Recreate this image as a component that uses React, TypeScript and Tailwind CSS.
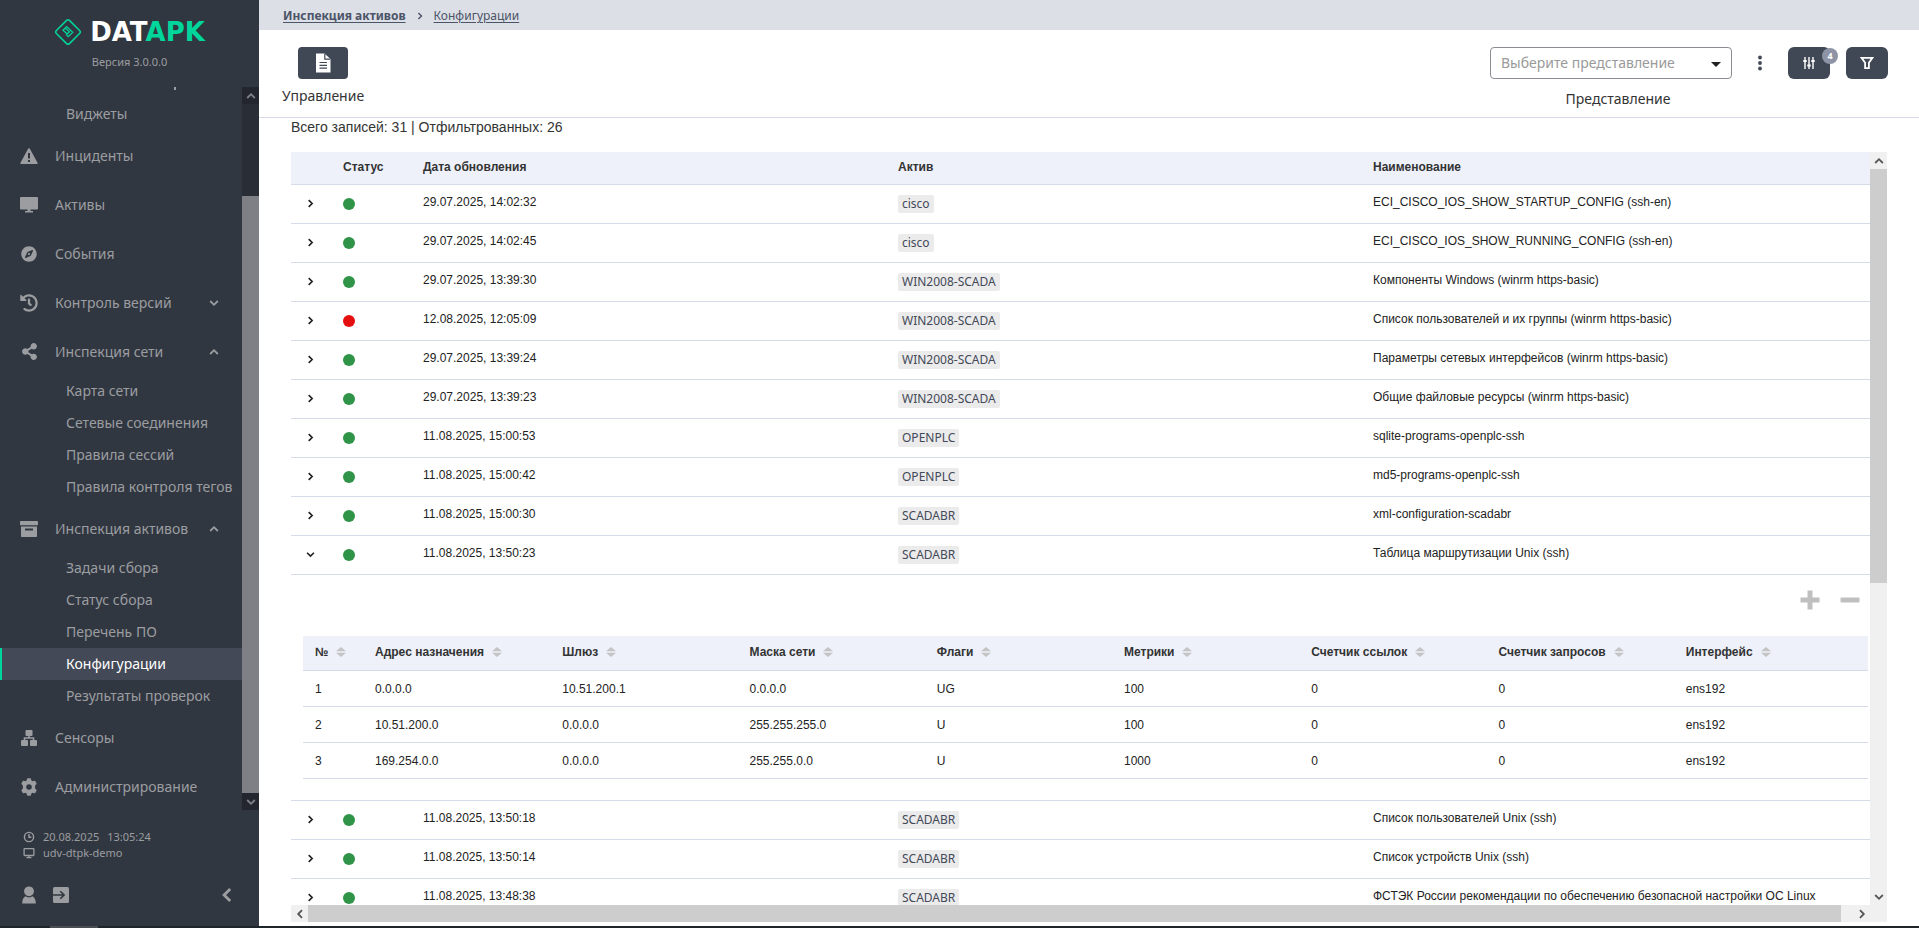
import { Fragment, useState, type ReactNode } from "react";
import { FaHistory, FaShareAlt, FaCompass } from "react-icons/fa";

type IconProps = { className?: string };

const svgBase = { xmlns: "http://www.w3.org/2000/svg", "aria-hidden": true } as const;

function LogoMark() {
  return (
    <svg {...svgBase} viewBox="0 0 28 28" className="size-7" fill="none" stroke="#00d69b">
      <rect x="4.800" y="4.800" width="18.400" height="18.400" rx="2" strokeWidth="1.500" transform="rotate(45 14 14)" />
      <path d="M13.300 16 9 12.200 12.600 8.600 18.700 14.200 14.300 18.600 12 16.400M11.600 10.500 15.400 13.700 13.200 16" strokeWidth="1.300" />
    </svg>
  );
}

function WarningIcon() {
  return (
    <svg {...svgBase} viewBox="0 0 18 18" className="size-[18px]" fill="currentColor">
      <path
        fillRule="evenodd"
        d="M9 1.200c.4 0 .7.2.9.5l7.600 14c.4.7-.1 1.300-.8 1.300H1.300c-.7 0-1.200-.6-.8-1.300l7.600-14c.2-.3.5-.5.9-.5zM8 6v5.500h2V6zM8 13v2h2v-2z"
      />
    </svg>
  );
}

function MonitorIcon() {
  return (
    <svg {...svgBase} viewBox="0 0 18 18" className="size-[18px]" fill="currentColor">
      <rect x="0" y="1" width="18" height="12.500" rx="1" />
      <path d="M7.500 13h3v2h2.500v1.500H5V15h2.500z" />
    </svg>
  );
}

function ArchiveIcon() {
  return (
    <svg {...svgBase} viewBox="0 0 18 18" className="size-[18px]" fill="currentColor">
      <rect x="0" y="1" width="18" height="4.200" rx=".6" />
      <path fillRule="evenodd" d="M1 6.500h16V16c0 .6-.4 1-1 1H2c-.6 0-1-.4-1-1zM5 8.600v2h8v-2z" />
    </svg>
  );
}

function SitemapIcon() {
  return (
    <svg {...svgBase} viewBox="0 0 18 18" className="size-[18px]" fill="currentColor">
      <rect x="5.500" y="1" width="7" height="6" rx="1" />
      <rect x="1" y="11" width="7" height="6" rx="1" />
      <rect x="10" y="11" width="7" height="6" rx="1" />
      <path d="M8.200 6h1.600v2.200h4.500V12h-1.600V9.800H5.300V12H3.700V8.200h4.500z" />
    </svg>
  );
}

function GearIcon() {
  return (
    <svg {...svgBase} viewBox="0 0 18 18" className="size-[18px]" fill="currentColor">
      <path
        fillRule="evenodd"
        d="M7 .9 C7.100.4 7.400.2 7.800.2h2.400c.4 0 .7.2.8.7l.4 1.700 1.100.6 1.700-.5c.5-.1.8 0 1 .3l1.300 2.200c.2.4.2.7-.2 1.100L15.100 7.600v2.800l1.200 1.300c.4.4.4.7.2 1.100L15.200 15c-.2.3-.5.4-1 .3l-1.700-.5-1.100.6-.4 1.700c-.1.5-.4.7-.8.7H7.800c-.4 0-.7-.2-.8-.7l-.4-1.700-1.100-.6-1.700.5c-.5.1-.8 0-1-.3L1.500 12.800c-.2-.4-.2-.7.2-1.100L2.900 10.400V7.600L1.700 6.300c-.4-.4-.4-.7-.2-1.100L2.800 3c.2-.3.5-.4 1-.3l1.700.5 1.100-.6zM9 6.200a2.800 2.800 0 1 0 0 5.600 2.800 2.800 0 0 0 0-5.600z"
      />
    </svg>
  );
}

function Chevron({ className }: IconProps) {
  return (
    <svg {...svgBase} viewBox="0 0 10 10" className={className} fill="none" stroke="currentColor" strokeWidth="1.800">
      <path d="M1.200 3 5 6.800 8.800 3" />
    </svg>
  );
}

function ClockIcon() {
  return (
    <svg {...svgBase} viewBox="0 0 12 12" className="size-3" fill="none" stroke="currentColor" strokeWidth="1.400">
      <circle cx="6" cy="6" r="4.600" />
      <path d="M6 3v3.200h2.400" />
    </svg>
  );
}

function HostIcon() {
  return (
    <svg {...svgBase} viewBox="0 0 12 12" className="size-3" fill="none" stroke="currentColor" strokeWidth="1.300">
      <rect x="1.100" y="1.700" width="9.800" height="6.800" rx=".5" />
      <path d="M3.500 10.600h5M6 8.500v2" />
    </svg>
  );
}

function UserIcon() {
  return (
    <svg {...svgBase} viewBox="0 0 18 18" className="size-[18px]" fill="currentColor">
      <circle cx="9" cy="5.300" r="4.900" />
      <path d="M5.300 10.300c2.200 1.500 5.200 1.500 7.400 0 2 1.200 3.100 3.600 3.100 7.200H2.200c0-3.600 1.100-6 3.100-7.200z" />
    </svg>
  );
}

function ExitIcon() {
  return (
    <svg {...svgBase} viewBox="0 0 18 18" className="size-[18px]" fill="none">
      <rect x="1" y="1" width="16" height="16" rx="1.500" fill="currentColor" />
      <path d="M1 9h10.500M8.300 5.200 12.100 9l-3.800 3.800" stroke="#313740" strokeWidth="1.600" />
    </svg>
  );
}

function DocIcon() {
  return (
    <svg {...svgBase} viewBox="0 0 18 20" className="h-5 w-[18px]">
      <path d="M2 .5h8.500L16.500 6v13.500H2z" fill="#fff" />
      <path d="M10.800.8v5.300h5.400" fill="none" stroke="#414855" strokeWidth="1.200" />
      <path d="M5.500 9.500h7.500M5.500 12.300h7.500M5.500 15.100h7.500" stroke="#414855" strokeWidth="1.200" />
    </svg>
  );
}

function SlidersIcon() {
  return (
    <svg {...svgBase} viewBox="0 0 12 12" className="size-3" fill="none" stroke="#fff" strokeWidth="1.400">
      <path d="M2 0v12M6 0v12M10 0v12" />
      <path d="M.3 4h3.400M4.300 8.500h3.400M8.300 4h3.400" strokeWidth="2.200" />
    </svg>
  );
}

function FunnelIcon() {
  return (
    <svg {...svgBase} viewBox="0 0 14 14" className="size-3.5" fill="none" stroke="#fff" strokeWidth="1.800">
      <path d="M1.600 1.900h10.800L8.900 6.700v5.500H5.100V6.700z" />
    </svg>
  );
}

function SortIcon() {
  return (
    <svg {...svgBase} viewBox="0 0 10 10" className="size-2.5" fill="#c4c4c4">
      <path d="M5 0 10 4.300H0zM5 10 0 5.700h10z" />
    </svg>
  );
}

type Section = { label: string; icon: ReactNode; open?: boolean; items?: string[] };

const sections: Section[] = [
  { label: "Инциденты", icon: <WarningIcon /> },
  { label: "Активы", icon: <MonitorIcon /> },
  { label: "События", icon: <FaCompass className="size-4" /> },
  { label: "Контроль версий", icon: <FaHistory className="size-[18px]" />, open: false },
  {
    label: "Инспекция сети",
    icon: <FaShareAlt className="size-[17px]" />,
    open: true,
    items: ["Карта сети", "Сетевые соединения", "Правила сессий", "Правила контроля тегов"],
  },
  {
    label: "Инспекция активов",
    icon: <ArchiveIcon />,
    open: true,
    items: ["Задачи сбора", "Статус сбора", "Перечень ПО", "Конфигурации", "Результаты проверок"],
  },
  { label: "Сенсоры", icon: <SitemapIcon /> },
  { label: "Администрирование", icon: <GearIcon /> },
];

function SubItem({ label, active }: { label: string; active?: boolean }) {
  return (
    <a
      href="#"
      className={
        active
          ? "flex h-8 shrink-0 items-center border-l-2 border-[#00d69b] bg-[#434956] pl-16 whitespace-nowrap text-white"
          : "flex h-8 shrink-0 items-center border-l-2 border-transparent pl-16 whitespace-nowrap"
      }
    >
      {label}
    </a>
  );
}

function Sidebar() {
  return (
    <aside className="flex w-[259px] shrink-0 flex-col bg-[#313740] font-['Noto_Sans',sans-serif] text-[#9b9da1]">
      <div className="flex h-[87px] shrink-0 flex-col items-center pt-[18px]">
        <div className="flex items-center gap-2">
          <LogoMark />
          <span className="font-['DejaVu_Sans',sans-serif] text-[26px] leading-7 font-bold text-white">
            DAT<span className="text-[#00d69b]">APK</span>
          </span>
        </div>
        <span className="pt-2 text-[11px] leading-4">Версия 3.0.0.0</span>
      </div>

      <div className="flex min-h-0 flex-1">
        <nav className="flex min-w-0 flex-1 flex-col overflow-hidden text-sm">
          <div className="h-[11px] shrink-0 pl-[174px]">
            <div className="h-[3px] w-0.5 bg-[#9b9da1]" />
          </div>
          <SubItem label="Виджеты" />
          {sections.map((s) => (
            <Fragment key={s.label}>
              <a href="#" className="flex h-[49px] shrink-0 items-center pr-[23px] pl-5 pt-0.5 whitespace-nowrap">
                <span className="flex w-[18px] justify-center">{s.icon}</span>
                <span className="flex-1 pl-[17px]">{s.label}</span>
                {s.open !== undefined && <Chevron className={s.open ? "size-2.5 rotate-180" : "size-2.5"} />}
              </a>
              {s.items?.map((i) => <SubItem key={i} label={i} active={i === "Конфигурации"} />)}
            </Fragment>
          ))}
        </nav>
        <div className="flex w-[17px] shrink-0 flex-col bg-[#292d35]">
          <div className="flex h-[17px] items-center justify-center bg-[#23262e] text-[#80828a]">
            <Chevron className="size-2.5 rotate-180" />
          </div>
          <div className="h-[92px]" />
          <div className="flex-1 bg-[#7f8085]" />
          <div className="flex h-[17px] items-center justify-center bg-[#23262e] text-[#80828a]">
            <Chevron className="size-2.5" />
          </div>
        </div>
      </div>

      <div className="flex h-[116px] shrink-0 flex-col pt-[19px]">
        <div className="flex h-4 items-center gap-2 pl-[23px] text-[11px]">
          <ClockIcon />
          <span>20.08.2025</span>
          <span>13:05:24</span>
        </div>
        <div className="flex h-4 items-center gap-2 pl-[23px] text-[11px]">
          <HostIcon />
          <span>udv-dtpk-demo</span>
        </div>
        <div className="flex items-center pt-[25px] pr-6 pl-5">
          <button aria-label="Профиль"><UserIcon /></button>
          <button aria-label="Выход" className="ml-[14px]"><ExitIcon /></button>
          <button aria-label="Свернуть меню" className="ml-auto">
            <Chevron className="size-4 rotate-90" />
          </button>
        </div>
      </div>
    </aside>
  );
}

type Config = { date: string; asset: string; name: string; failed?: boolean; open?: boolean };

const configs: Config[] = [
  { date: "29.07.2025, 14:02:32", asset: "cisco", name: "ECI_CISCO_IOS_SHOW_STARTUP_CONFIG (ssh-en)" },
  { date: "29.07.2025, 14:02:45", asset: "cisco", name: "ECI_CISCO_IOS_SHOW_RUNNING_CONFIG (ssh-en)" },
  { date: "29.07.2025, 13:39:30", asset: "WIN2008-SCADA", name: "Компоненты Windows (winrm https-basic)" },
  { date: "12.08.2025, 12:05:09", asset: "WIN2008-SCADA", name: "Список пользователей и их группы (winrm https-basic)", failed: true },
  { date: "29.07.2025, 13:39:24", asset: "WIN2008-SCADA", name: "Параметры сетевых интерфейсов (winrm https-basic)" },
  { date: "29.07.2025, 13:39:23", asset: "WIN2008-SCADA", name: "Общие файловые ресурсы (winrm https-basic)" },
  { date: "11.08.2025, 15:00:53", asset: "OPENPLC", name: "sqlite-programs-openplc-ssh" },
  { date: "11.08.2025, 15:00:42", asset: "OPENPLC", name: "md5-programs-openplc-ssh" },
  { date: "11.08.2025, 15:00:30", asset: "SCADABR", name: "xml-configuration-scadabr" },
  { date: "11.08.2025, 13:50:23", asset: "SCADABR", name: "Таблица маршрутизации Unix (ssh)", open: true },
  { date: "11.08.2025, 13:50:18", asset: "SCADABR", name: "Список пользователей Unix (ssh)" },
  { date: "11.08.2025, 13:50:14", asset: "SCADABR", name: "Список устройств Unix (ssh)" },
  { date: "11.08.2025, 13:48:38", asset: "SCADABR", name: "ФСТЭК России рекомендации по обеспечению безопасной настройки ОС Linux" },
];

const routeColumns = ["№", "Адрес назначения", "Шлюз", "Маска сети", "Флаги", "Метрики", "Счетчик ссылок", "Счетчик запросов", "Интерфейс"];

const routes = [
  ["1", "0.0.0.0", "10.51.200.1", "0.0.0.0", "UG", "100", "0", "0", "ens192"],
  ["2", "10.51.200.0", "0.0.0.0", "255.255.255.0", "U", "100", "0", "0", "ens192"],
  ["3", "169.254.0.0", "0.0.0.0", "255.255.0.0", "U", "1000", "0", "0", "ens192"],
];

function RoutesPanel() {
  return (
    <div className="mr-[14px] ml-3 pt-[15px] pb-[21px]">
      <div className="flex h-[46px] items-start justify-end gap-5 pr-2">
        <button aria-label="Развернуть все">
          <svg {...svgBase} viewBox="0 0 20 20" className="size-5" fill="#bfbfbf">
            <path d="M7.500.5h5v7h7v5h-7v7h-5v-7h-7v-5h7z" />
          </svg>
        </button>
        <button aria-label="Свернуть все">
          <svg {...svgBase} viewBox="0 0 20 20" className="size-5" fill="#bfbfbf">
            <rect x=".5" y="7.500" width="19" height="5" rx="1" />
          </svg>
        </button>
      </div>
      <table className="w-full table-fixed border-separate border-spacing-0 text-left">
        <thead>
          <tr className="h-[35px] bg-[#eef1fa] text-[#333]">
            {routeColumns.map((c, i) => (
              <th key={c} className={i === 0 ? "w-[60px] border-b border-[#d5dbe8] px-3 pt-1.5 pb-2" : "border-b border-[#d5dbe8] px-3 pt-1.5 pb-2"}>
                <button className="flex items-center gap-2 font-bold whitespace-nowrap">
                  {c}
                  <SortIcon />
                </button>
              </th>
            ))}
            <th className="w-[7px] border-b border-[#d5dbe8]" />
          </tr>
        </thead>
        <tbody>
          {routes.map((r) => (
            <tr key={r[0]} className="h-9">
              {r.map((v, i) => (
                <td key={i} className="border-b border-[#d5dbe8] px-3">{v}</td>
              ))}
              <td className="border-b border-[#d5dbe8]" />
            </tr>
          ))}
        </tbody>
      </table>
    </div>
  );
}

function ConfigTable() {
  const [open, setOpen] = useState(() => configs.map((c) => !!c.open));
  return (
    <table className="w-[calc(100%+12px)] table-fixed border-separate border-spacing-0 text-left text-xs">
      <thead>
        <tr className="h-[33px] bg-[#eef1fa] text-[#333]">
          <th className="w-10 border-b border-[#d5dbe8]" />
          <th className="w-20 border-b border-[#d5dbe8] pb-0.5 pl-3">Статус</th>
          <th className="border-b border-[#d5dbe8] pb-0.5 pl-3">Дата обновления</th>
          <th className="border-b border-[#d5dbe8] pb-0.5 pl-3">Актив</th>
          <th className="border-b border-[#d5dbe8] pb-0.5 pl-3">Наименование</th>
          <th className="w-[46px] border-b border-[#d5dbe8]" />
        </tr>
      </thead>
      <tbody>
        {configs.map((c, i) => (
          <Fragment key={c.date}>
            <tr className="h-[39px] whitespace-nowrap">
              <td className="border-b border-[#d5dbe8] pr-0.5 pb-0.5">
                <button
                  aria-label="Подробнее"
                  aria-expanded={open[i]}
                  className="mx-auto flex text-[#222]"
                  onClick={() => setOpen(open.map((o, n) => (n === i ? !o : o)))}
                >
                  <Chevron className={open[i] ? "size-[9px]" : "size-[9px] -rotate-90"} />
                </button>
              </td>
              <td className="border-b border-[#d5dbe8] pl-3">
                <div className={c.failed ? "size-3 rounded-full bg-[#e60f0f]" : "size-3 rounded-full bg-[#2f9447]"} />
              </td>
              <td className="border-b border-[#d5dbe8] pb-1 pl-3">{c.date}</td>
              <td className="border-b border-[#d5dbe8] pl-3">
                <span className="inline-block h-[18px] rounded-xs bg-[#ebebec] px-1 align-middle font-['Noto_Sans',sans-serif] leading-[18px] text-[#434956]">
                  {c.asset}
                </span>
              </td>
              <td className="border-b border-[#d5dbe8] pb-1 pl-3">{c.name}</td>
              <td className="border-b border-[#d5dbe8]" />
            </tr>
            {open[i] && (
              <tr>
                <td colSpan={6} className="border-b border-[#d5dbe8]">
                  <RoutesPanel />
                </td>
              </tr>
            )}
          </Fragment>
        ))}
      </tbody>
    </table>
  );
}

function Toolbar() {
  return (
    <div className="flex h-[88px] shrink-0 items-start justify-between border-b border-[#d8dbe7] pt-[17px] pr-[31px] pl-[23px] font-['Noto_Sans',sans-serif] text-sm text-[#333]">
      <div className="flex flex-col items-center">
        <button aria-label="Управление" className="flex h-8 w-[50px] items-center justify-center rounded bg-[#414855]">
          <DocIcon />
        </button>
        <span className="pt-[7px]">Управление</span>
      </div>
      <div className="flex items-start">
        <div className="flex flex-col items-center">
          <div className="relative mr-[14px]">
            <select
              id="view"
              defaultValue=""
              className="h-8 w-[242px] appearance-none rounded border border-[#8b8d92] bg-white px-2.5 text-[#9a9a9a]"
            >
              <option value="">Выберите представление</option>
            </select>
            <svg {...svgBase} viewBox="0 0 10 5" className="pointer-events-none absolute top-[15px] right-[11px] h-[5px] w-2.5" fill="#222">
              <path d="M0 0h10L5 5z" />
            </svg>
          </div>
          <label htmlFor="view" className="pt-2.5">Представление</label>
        </div>
        <button aria-label="Ещё" className="flex h-8 w-7 items-center justify-center">
          <svg {...svgBase} viewBox="0 0 4 16" className="h-4 w-1" fill="#414855">
            <circle cx="2" cy="2.500" r="1.900" />
            <circle cx="2" cy="8" r="1.900" />
            <circle cx="2" cy="13.500" r="1.900" />
          </svg>
        </button>
        <button aria-label="Столбцы" className="relative ml-3.5 flex h-8 w-[42px] items-center justify-center rounded-md bg-[#414855]">
          <SlidersIcon />
          <span className="absolute top-px -right-2 flex size-4 items-center justify-center rounded-full bg-[#8e94a6] text-[9px] leading-4 font-bold text-white">
            4
          </span>
        </button>
        <button aria-label="Фильтр" className="ml-4 flex h-8 w-[42px] items-center justify-center rounded-md bg-[#414855]">
          <FunnelIcon />
        </button>
      </div>
    </div>
  );
}

function ContentArea() {
  return (
    <section className="flex min-h-0 flex-1 flex-col px-8 pb-1 font-['Liberation_Sans',Arial,sans-serif] text-[#222]">
      <p className="h-[34px] shrink-0 text-sm leading-[18px] text-[#333]">Всего записей: 31 | Отфильтрованных: 26</p>
      <div className="grid min-h-0 flex-1 grid-cols-[minmax(0,1fr)_17px] grid-rows-[minmax(0,1fr)_17px]">
        <div className="overflow-hidden">
          <ConfigTable />
        </div>
        <div className="flex flex-col bg-[#f0f0f0] text-[#555]">
          <div className="flex h-[17px] items-center justify-center">
            <Chevron className="size-2.5 rotate-180" />
          </div>
          <div className="h-[55%] bg-[#cdcdcd]" />
          <div className="mt-auto flex h-[17px] items-center justify-center">
            <Chevron className="size-2.5" />
          </div>
        </div>
        <div className="flex bg-[#f0f0f0] text-[#555]">
          <div className="flex w-[17px] items-center justify-center">
            <Chevron className="size-2.5 rotate-90" />
          </div>
          <div className="mr-3 flex-1 bg-[#cdcdcd]" />
          <div className="flex w-[17px] items-center justify-center">
            <Chevron className="size-2.5 -rotate-90" />
          </div>
        </div>
        <div className="bg-[#f0f0f0]" />
      </div>
    </section>
  );
}

export default function App() {
  return (
    <div className="flex h-screen flex-col overflow-hidden bg-white">
      <div className="flex min-h-0 flex-1">
        <Sidebar />
        <main className="flex min-w-0 flex-1 flex-col">
          <nav className="flex h-[30px] shrink-0 items-center gap-2.5 bg-[#dcdfe6] pt-0.5 pl-6 font-['Noto_Sans',sans-serif] text-xs text-[#4c5468]">
            <a href="#" className="font-bold underline underline-offset-2">Инспекция активов</a>
            <Chevron className="size-2 -rotate-90" />
            <a href="#" className="underline underline-offset-2">Конфигурации</a>
          </nav>
          <Toolbar />
          <ContentArea />
        </main>
      </div>
      <div className="h-0.5 shrink-0 bg-[#1e252b] pl-[50px]">
        <div className="h-full w-12 bg-[#4b4f54]" />
      </div>
    </div>
  );
}
